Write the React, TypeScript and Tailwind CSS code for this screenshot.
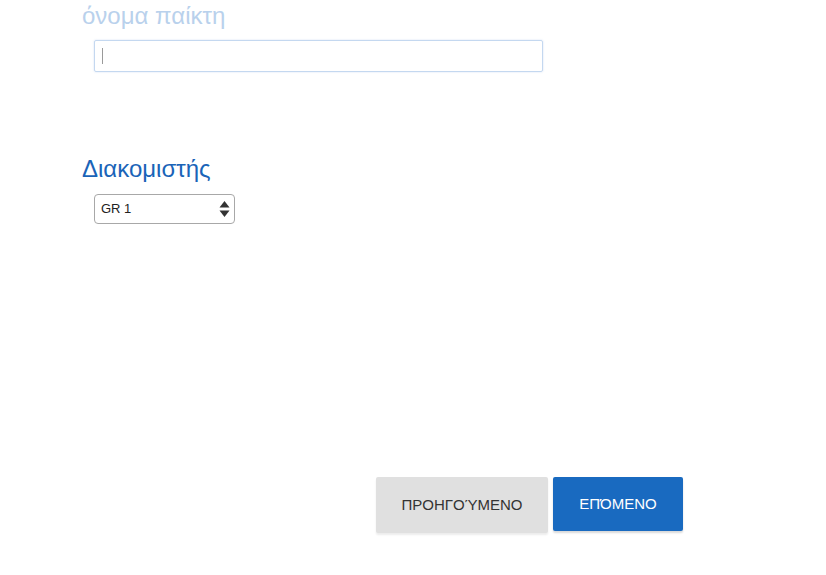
import React from 'react';

const App: React.FC = () => {
  return (
    <div className="w-[826px] h-[575px] bg-white font-['Liberation_Sans',Arial,sans-serif] relative">
      <div className="pl-[82px] pt-[3px] flex flex-col">
        {/* Player name */}
        <label className="text-[24px] leading-[26px] text-[#b9d1ec]">όνομα παίκτη</label>
        <div className="ml-[12px] mt-[11px] w-[449px] h-[32px] border border-[#c4d8f0] rounded-[2px] shadow-[0_0_2px_rgba(120,160,220,0.35)] flex items-center pl-[7px]">
          <span className="w-px h-[16px] bg-[#9a9a9a]" />
        </div>

        {/* Server */}
        <label className="mt-[84px] text-[24px] leading-[26px] text-[#1a64b8]">Διακομιστής</label>
        <div className="ml-[12px] mt-[12px] w-[141px] h-[30px] border border-[#a8a8a8] rounded-[4px] flex items-center justify-between pl-[6px] pr-[4px]">
          <span className="text-[13px] text-[#222]">GR 1</span>
          <svg width="11" height="18" viewBox="0 0 11 18">
            <path d="M5.5 1 L10.5 7.5 H0.5 Z" fill="#333" />
            <path d="M5.5 17 L10.5 10.5 H0.5 Z" fill="#333" />
          </svg>
        </div>

        {/* Navigation */}
        <div className="mt-[253px] ml-[294px] flex gap-[5px] items-start">
          <button className="w-[172px] h-[56px] bg-[#e0e0e0] rounded-[2px] shadow-[0_2px_2px_rgba(0,0,0,0.08)] text-[15px] text-[#333]">
            ΠΡΟΗΓΟΎΜΕΝΟ
          </button>
          <button className="w-[130px] h-[54px] bg-[#196ac0] rounded-[2px] shadow-[0_2px_2px_rgba(0,0,0,0.15)] text-[15px] text-white">
            ΕΠΌΜΕΝΟ
          </button>
        </div>
      </div>
    </div>
  );
};

export default App;
